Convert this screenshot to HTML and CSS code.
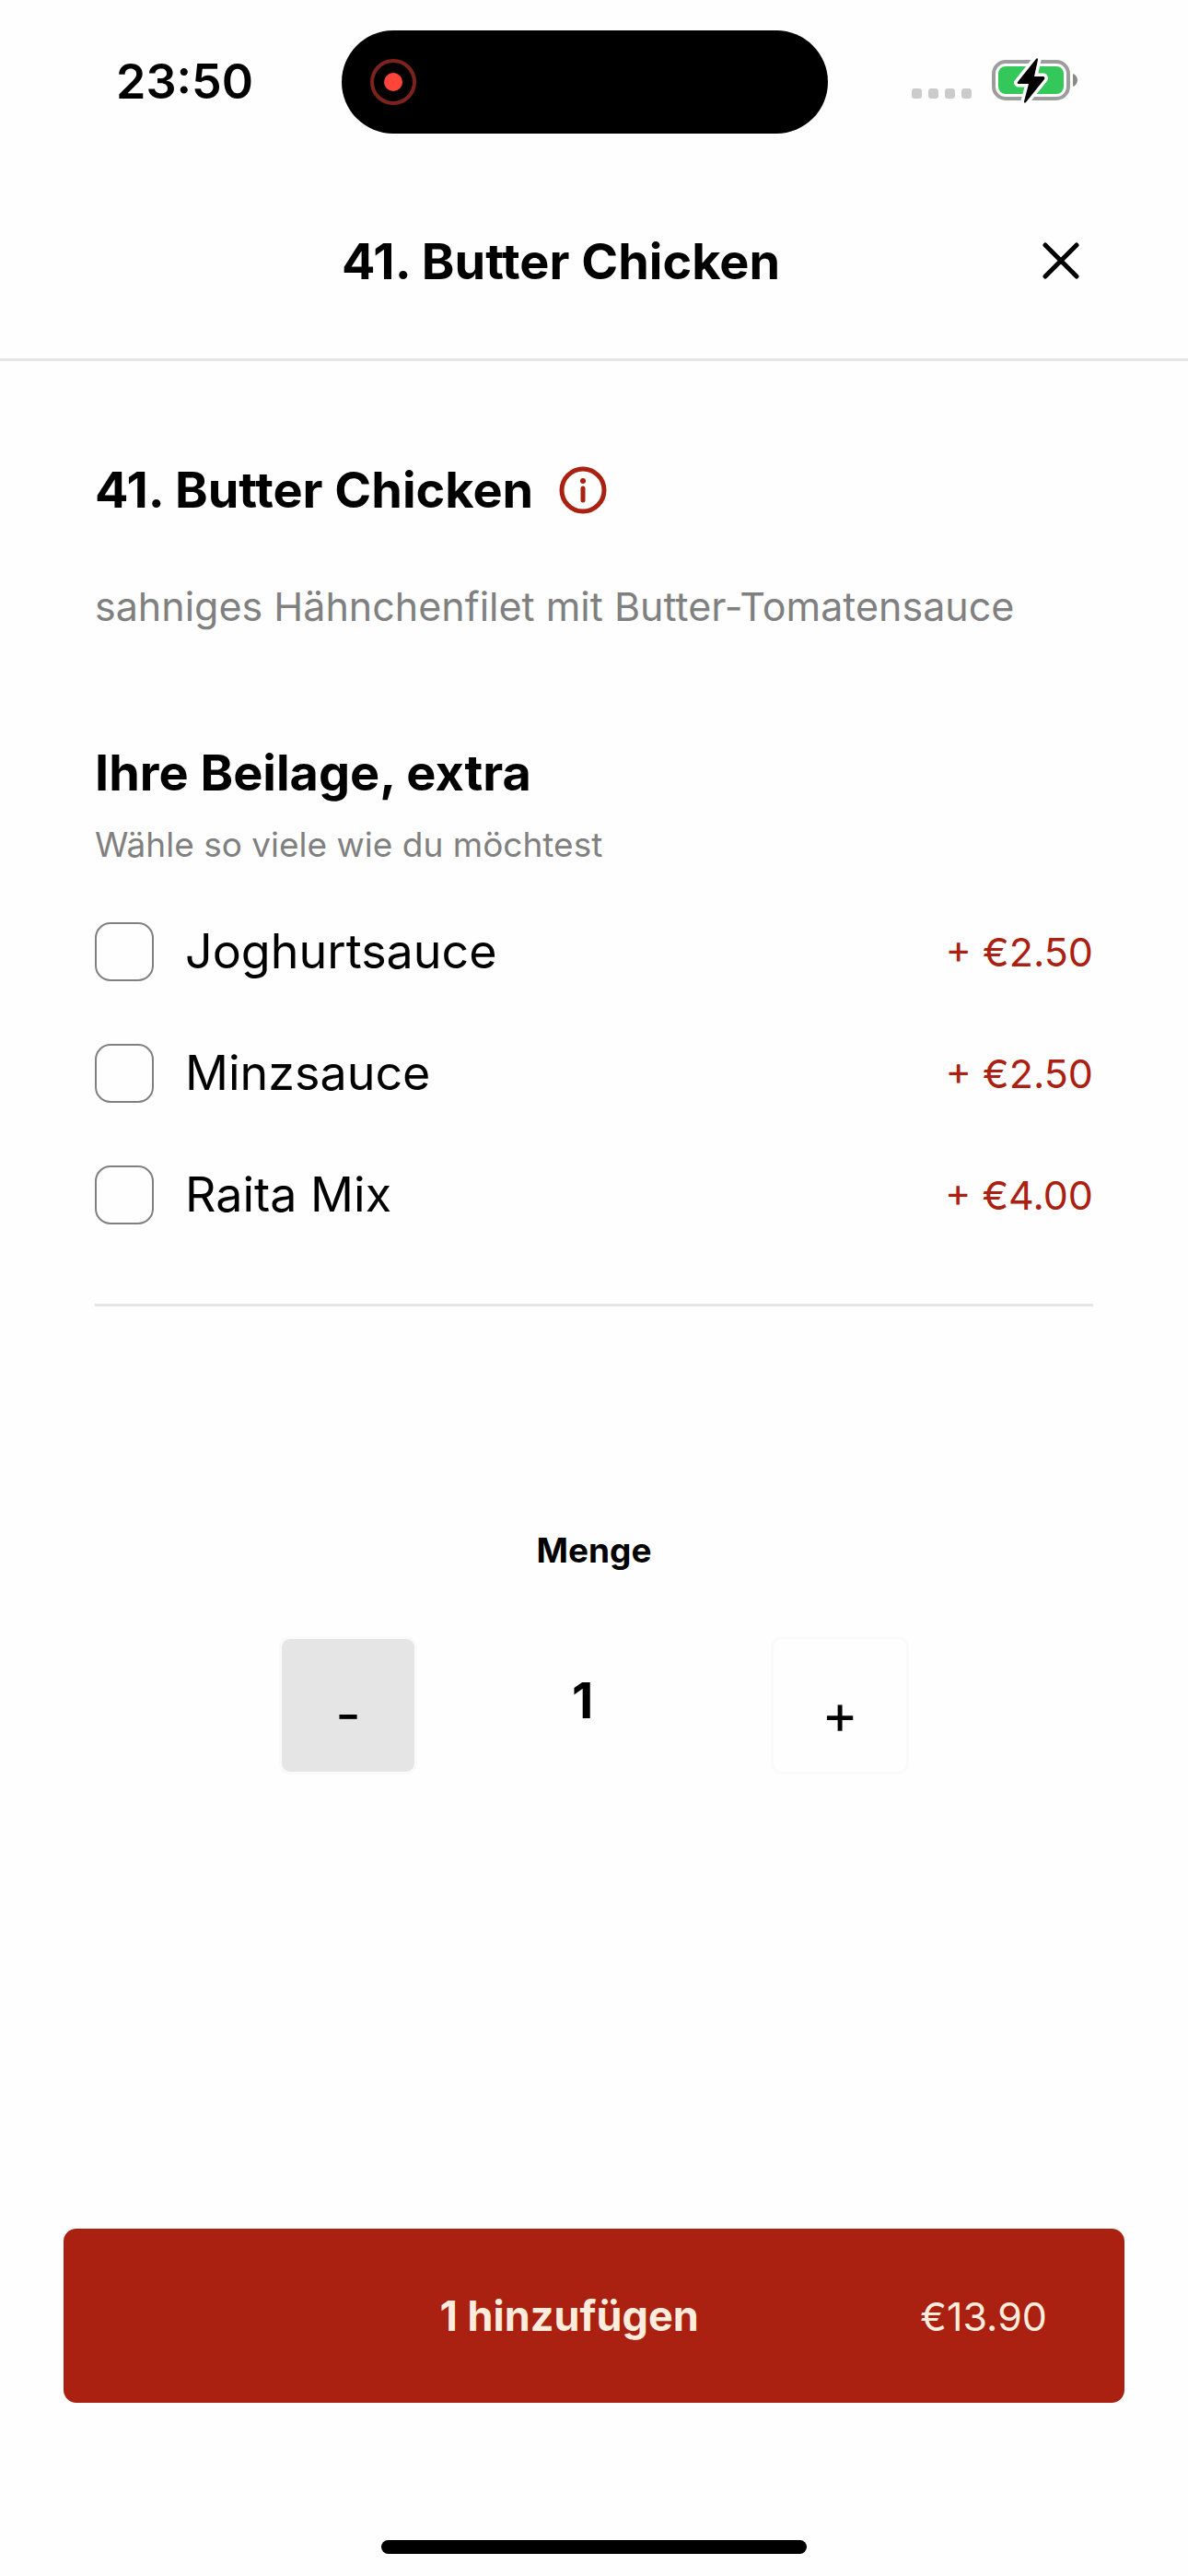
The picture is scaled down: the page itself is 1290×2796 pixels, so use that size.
FILE: index.html
```html
<!DOCTYPE html>
<html lang="de">
<head>
    <meta charset="UTF-8">
    <meta name="viewport" content="width=device-width, initial-scale=1.0">
    <title>41. Butter Chicken</title>
    <link rel="stylesheet" href="styles.css">
</head>
<body>
    <div class="status-bar">
        <span class="time">23:50</span>
        <div class="island">
            <svg width="52" height="52" viewBox="0 0 52 52" aria-hidden="true">
                <circle cx="26" cy="26" r="23" fill="none" stroke="#7d231e" stroke-width="4"/>
                <circle cx="26" cy="26" r="10" fill="#ff453a"/>
            </svg>
        </div>
        <div class="status-icons">
            <svg width="66" height="44" viewBox="0 0 66 44" fill="#cbcbcb" aria-hidden="true">
                <rect x="0" y="31" width="11" height="11" rx="3"/>
                <rect x="18" y="31" width="11" height="11" rx="3"/>
                <rect x="36" y="31" width="11" height="11" rx="3"/>
                <rect x="54" y="31" width="11" height="11" rx="3"/>
            </svg>
            <svg width="94" height="54" viewBox="0 -4 94 54" aria-hidden="true">
                <rect x="3" y="3" width="81" height="40" rx="13" fill="none" stroke="#9d9d9d" stroke-width="4"/>
                <path d="M89 16c3 1 5 4 5 7s-2 6-5 7z" fill="#8a8a8a"/>
                <rect x="8" y="8" width="71" height="30" rx="8" fill="#34c759"/>
                <path d="M49 0 29 25c-1 1 0 2 1 2h11l-5 19c0 2 1 2 2 1l20-25c1-1 0-3-1-3H47l4-18c0-2-1-2-2-1z" fill="#000" stroke="#fff" stroke-width="7" paint-order="stroke"/>
            </svg>
        </div>
    </div>

    <header class="header">
        <h1 class="header-title">41. Butter Chicken</h1>
        <button type="button" class="close-button" aria-label="Schließen">
            <svg width="40" height="40" viewBox="0 0 40 40" aria-hidden="true">
                <path d="M3 3l34 34M37 3L3 37" stroke="#000" stroke-width="5" stroke-linecap="round"/>
            </svg>
        </button>
    </header>

    <main class="content">
        <div class="product-title">
            <h2>41. Butter Chicken</h2>
            <button type="button" class="info-button" aria-label="Info">
                <svg width="52" height="52" viewBox="0 0 52 52" aria-hidden="true">
                    <circle cx="26" cy="26" r="23" fill="none" stroke="#aa2011" stroke-width="5"/>
                    <circle cx="26" cy="16" r="3" fill="#aa2011"/>
                    <path d="M26 24v13" stroke="#aa2011" stroke-width="5" stroke-linecap="round"/>
                </svg>
            </button>
        </div>
        <p class="description">sahniges Hähnchenfilet mit Butter-Tomatensauce</p>

        <h2 class="extras-title">Ihre Beilage, extra</h2>
        <p class="hint">Wähle so viele wie du möchtest</p>
        <div class="extras">
            <label class="extra">
                <input type="checkbox" name="joghurtsauce">
                <span class="extra-name">Joghurtsauce</span>
                <span class="extra-price">+ €2.50</span>
            </label>
            <label class="extra">
                <input type="checkbox" name="minzsauce">
                <span class="extra-name">Minzsauce</span>
                <span class="extra-price">+ €2.50</span>
            </label>
            <label class="extra">
                <input type="checkbox" name="raita">
                <span class="extra-name">Raita Mix</span>
                <span class="extra-price">+ €4.00</span>
            </label>
        </div>

        <h3 class="quantity-title">Menge</h3>
        <div class="quantity">
            <button type="button" class="quantity-button minus">-</button>
            <span class="count">1</span>
            <button type="button" class="quantity-button">+</button>
        </div>
    </main>

    <footer class="footer">
        <button type="button" class="add-button">
            <span class="add-label">1 hinzufügen</span>
            <span class="add-price">€13.90</span>
        </button>
        <div class="home-indicator"></div>
    </footer>
</body>
</html>
```
FILE: styles.css
```css
* { box-sizing: border-box; }
body {
    font-family: Inter, "Liberation Sans", sans-serif;
    margin: 0;
    min-height: 100vh;
    display: flex;
    flex-direction: column;
    background-color: #fefefe;
    color: black;
}
h1, h2, h3, p { margin: 0; }
button {
    font-family: inherit;
    border: none;
    padding: 0;
    background: none;
    color: inherit;
    cursor: pointer;
}
svg { display: block; }

/* status bar */
.status-bar {
    height: 177px;
    display: grid;
    grid-template-columns: 371px 1fr 391px;
    align-items: center;
}
.time {
    padding-left: 126px;
    font-size: 52px;
    font-weight: 600;
}
.island {
    height: 112px;
    padding-left: 30px;
    border-radius: 56px;
    background-color: black;
    display: flex;
    align-items: center;
}
.status-icons {
    display: flex;
    justify-content: flex-end;
    align-items: center;
    gap: 20px;
    padding: 0 120px 4px 0;
}

/* header */
.header {
    height: 215px;
    display: flex;
    align-items: center;
    padding: 0 102px;
    border-bottom: 3px solid #e5e5e5;
}
.header-title {
    flex: 1;
    text-align: center;
    font-size: 54px;
    font-weight: 700;
}
.close-button {
    width: 72px;
    height: 72px;
    display: flex;
    align-items: center;
    justify-content: center;
}

/* product */
.content { padding: 108px 103px 0; }
h2 {
    font-size: 54px;
    line-height: 64px;
    font-weight: 700;
}
.product-title {
    display: flex;
    align-items: center;
    gap: 28px;
}
.description {
    margin-top: 66px;
    font-size: 43px;
    line-height: 56px;
    color: #808080;
}
.extras-title { margin-top: 121px; }
.hint {
    margin-top: 22px;
    font-size: 37px;
    line-height: 48px;
    color: #808080;
}
.extras {
    display: flex;
    flex-direction: column;
    gap: 68px;
    margin-top: 60px;
    padding-bottom: 86px;
    border-bottom: 3px solid #e5e5e5;
}
.extra {
    display: flex;
    align-items: center;
    font-size: 52px;
    line-height: 64px;
}
.extra input {
    appearance: none;
    width: 64px;
    height: 64px;
    margin: 0 34px 0 0;
    border: 2px solid #808080;
    border-radius: 17px;
}
.extra input:checked { background-color: #aa2011; }
.extra-name { flex: 1; }
.extra-price {
    font-size: 43px;
    color: #aa2011;
}

/* quantity */
.quantity-title {
    margin-top: 241px;
    text-align: center;
    font-size: 37px;
    line-height: 48px;
    font-weight: 700;
}
.quantity {
    display: flex;
    justify-content: center;
    gap: 168px;
    margin-top: 69px;
}
.quantity-button {
    width: 150px;
    height: 150px;
    padding-top: 18px;
    border: 3px solid #fafafa;
    border-radius: 12px;
    font-size: 60px;
}
.minus { background-color: #e5e5e5; }
.count {
    width: 48px;
    font-size: 54px;
    line-height: 140px;
    font-weight: 700;
}

/* footer */
.footer {
    margin-top: auto;
    padding: 0 69px 24px;
}
.add-button {
    width: 100%;
    height: 189px;
    display: flex;
    align-items: center;
    padding: 0 84px 0 168px;
    border-radius: 14px;
    background-color: #aa2011;
    color: #ffecdc;
}
.add-label {
    flex: 1;
    font-size: 45px;
    font-weight: 700;
}
.add-price { font-size: 43px; }
.home-indicator {
    width: 462px;
    height: 15px;
    margin: 149px auto 0;
    border-radius: 8px;
    background-color: black;
}
```
